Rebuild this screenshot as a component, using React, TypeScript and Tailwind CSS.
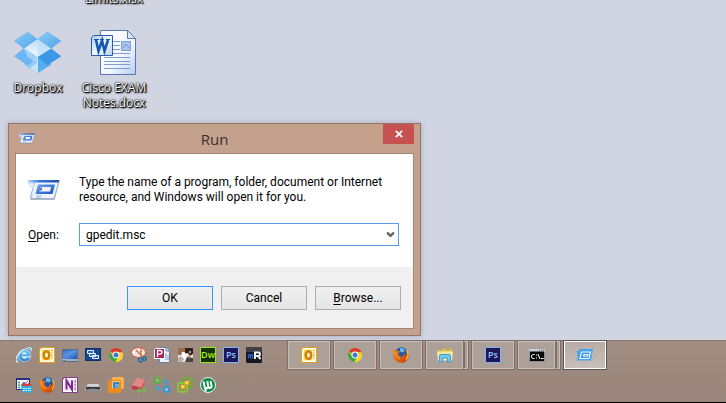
import React, { useState } from 'react'
import { ChevronDown } from 'lucide-react'

type IconProps = { className?: string }

const DropboxIcon: React.FC<IconProps> = ({ className }) => (
  <svg viewBox="42 93 147 132" className={className} aria-hidden="true">
    <defs>
      <linearGradient id="dbFlap" x1="0" y1="0" x2="1" y2="1">
        <stop offset="0" stopColor="#8ccbf6" />
        <stop offset="1" stopColor="#4fa6ea" />
      </linearGradient>
      <linearGradient id="dbLid" x1="0" y1="0" x2="0" y2="1">
        <stop offset="0" stopColor="#c3e0f8" />
        <stop offset="1" stopColor="#f1f8fe" />
      </linearGradient>
    </defs>
    <path d="M73 145v50l41 27v-52z" fill="#8fcaf5" />
    <path d="M155 145v50l-41 27v-52z" fill="#57aeee" />
    <path d="M114 190v32l-20-13v-8z" fill="#c4e3fa" />
    <path d="M43 122l41-27 30 22-41 28z" fill="url(#dbFlap)" stroke="#4a9de0" />
    <path d="M186 122l-42-27-30 22 41 28z" fill="url(#dbFlap)" stroke="#4a9de0" />
    <path d="M73 145l-30 24 41 27 30-25z" fill="#6bb7f1" stroke="#4a9de0" />
    <path d="M155 145l31 24-42 27-30-25z" fill="#3c97e6" stroke="#3a8ddb" />
    <path d="M73 145l41-28 41 28-41 26z" fill="url(#dbLid)" />
    <path d="M114 117l41 28-41 26z" fill="#b4daf8" opacity=".6" />
    <path d="M73 145l41 26v20l-30-19z" fill="#a9d6f8" opacity=".8" />
    <path d="M114 171v50" stroke="#dff0fd" strokeWidth="2" />
  </svg>
)

const WordDocIcon: React.FC<IconProps> = ({ className }) => (
  <svg viewBox="0 0 46 46" className={className} aria-hidden="true">
    <defs>
      <linearGradient id="docPage" x1="0" y1="0" x2="1" y2="1">
        <stop offset="0" stopColor="#ffffff" />
        <stop offset=".6" stopColor="#f3f7fe" />
        <stop offset="1" stopColor="#b4cbf2" />
      </linearGradient>
      <linearGradient id="docBadge" x1="0" y1="0" x2="1" y2="1">
        <stop offset="0" stopColor="#a7c9f5" />
        <stop offset=".5" stopColor="#f2f8ff" />
        <stop offset="1" stopColor="#b7d2f6" />
      </linearGradient>
    </defs>
    <path d="M9.500.5h27l8 8v36h-35z" fill="url(#docPage)" stroke="#5b79b0" />
    <path d="M36.500.5v8h8z" fill="#dbe6f8" stroke="#5b79b0" />
    <path d="M22 11.500h7M22 15.500h7M22 19.500h7M13 23.500h26M13 27.500h26M13 31.500h26M13 34.500h26M13 38.500h26" stroke="#7d9cd6" />
    <path d="M30.500 11.500h9v9h-9z" fill="#a9c5ef" stroke="#7d9dd6" />
    <path d="M32 18l3-4 3 4" stroke="#6e95d6" fill="none" />
    <path d="M2.500 5.500h19v20h-21v-18z" fill="url(#docBadge)" stroke="#2b5bab" />
    <path d="M5 10l2.500 11L11 10.500 13.500 21 17 10" fill="none" stroke="#1656b0" strokeWidth="2.600" />
    <path d="M3 9.500h5M9 9.500h4M15 9.500h4" stroke="#1656b0" strokeWidth="1.200" />
  </svg>
)

const RunIcon: React.FC<IconProps> = ({ className }) => (
  <svg viewBox="0 0 32 22" className={className} aria-hidden="true">
    <defs>
      <linearGradient id="runBar" x1="0" x2="1">
        <stop offset="0" stopColor="#b9d3f5" />
        <stop offset=".35" stopColor="#3d7ad6" />
        <stop offset="1" stopColor="#1d4fa6" />
      </linearGradient>
      <linearGradient id="runBox" x1="0" x2="1" y2="1">
        <stop offset="0" stopColor="#6ea6ee" />
        <stop offset="1" stopColor="#174fc4" />
      </linearGradient>
    </defs>
    <path d="M7.500 3h24l-5 18h-24z" fill="#7d8694" opacity=".6" />
    <path d="M7 2h24l-5 17.500H2z" fill="#eef3fb" stroke="#9fb2ce" />
    <path d="M0 4.500h6M1 7.500h5" stroke="#d3e2f6" strokeWidth="2" />
    <path d="M0 1h31.500l-1 2.500H0z" fill="url(#runBar)" />
    <path d="M10 5.500h17L24.500 15h-17z" fill="url(#runBox)" />
    <path d="M12.500 8h10.500l-1 4.500H11.500z" fill="#f4f8fe" />
    <path d="M13.500 8.500l-1 3" stroke="#55606e" strokeWidth="1.500" />
    <path d="M3 15.500h2l-1 3.500H2zM9 16h5l-1 3H8z" fill="#b9d2f4" />
  </svg>
)

const RunTaskIcon: React.FC<IconProps> = ({ className }) => (
  <svg viewBox="0 0 16 16" className={className} aria-hidden="true">
    <path d="M2.500 2H16l-2 11.500H0l1-3H0l1-2H0l1-2H0V4h2z" fill="#42a3ee" />
    <path d="M4.500 5h9l-1.500 6.500H3z" fill="#3c9ae8" stroke="#e8f5ff" strokeWidth="1.200" />
    <path d="M6.500 7h5l-.5 2.500H6z" fill="#fff" />
    <path d="M8 7.700h2l-.3 1h-2z" fill="#2b83d4" />
  </svg>
)

const IEIcon: React.FC<IconProps> = ({ className }) => (
  <svg viewBox="0 0 16 16" className={className} aria-hidden="true">
    <defs>
      <linearGradient id="ie" x1="0" x2="0" y2="1">
        <stop offset="0" stopColor="#7fcdf6" />
        <stop offset="1" stopColor="#1f83cf" />
      </linearGradient>
    </defs>
    <circle cx="8.500" cy="8.500" r="6.500" fill="#d9effb" />
    <path
      d="M8.500 2.500a6 6 0 1 0 5.700 8h-3.500c-.5.800-1.200 1.200-2.200 1.200-1.500 0-2.500-.9-2.600-2.400h8.600C14.700 5.300 12.300 2.500 8.500 2.500zM6 7.200C6.200 5.900 7.200 5.200 8.500 5.200s2.200.7 2.400 2z"
      fill="url(#ie)"
    />
    <path d="M2.500 14.800C-2 15 .5 8.500 6.500 4.200 11.500.600 16.500-.2 15 4" fill="none" stroke="#e8f6fd" strokeWidth="2" />
    <path d="M3 14.500C-1 14.800 1.500 8.500 7 4.300 11.500 1 15.700.700 14.800 3.800" fill="none" stroke="#3c9fe0" strokeWidth="1" />
  </svg>
)

const OutlookIcon: React.FC<IconProps> = ({ className }) => (
  <svg viewBox="0 0 16 16" className={className} aria-hidden="true">
    <path d="M2 0h14v16H0V2z" fill="#e6a310" />
    <path d="M2.500 1.500h12v13h-13v-12z" fill="#fff3c4" stroke="#fff" />
    <path d="M3 3h8v10H3z" fill="#ffd65a" />
    <path d="M12 3.500h2M12 6h2M12 8.500h2M12 11h2" stroke="#e9b64b" />
    <ellipse cx="7.500" cy="8" rx="2.800" ry="3.800" fill="#fff0b8" stroke="#cf8106" strokeWidth="2.400" />
  </svg>
)

const DesktopIcon: React.FC<IconProps> = ({ className }) => (
  <svg viewBox="0 0 16 16" className={className} aria-hidden="true">
    <defs>
      <linearGradient id="desk" x1="0" x2="1" y2="1">
        <stop offset="0" stopColor="#2f5fb4" />
        <stop offset=".5" stopColor="#4f8fe3" />
        <stop offset="1" stopColor="#1f53ad" />
      </linearGradient>
    </defs>
    <path d="M0 2h16v13H0z" fill="#5d6f88" />
    <path d="M1 3h14v9H1z" fill="url(#desk)" />
    <path d="M1 4h14L1 10z" fill="#85b3ee" opacity=".25" />
    <path d="M0 12h16v2H0z" fill="#a1b2c8" />
    <path d="M1 13.500h3" stroke="#5b9a58" />
  </svg>
)

const SwitcherIcon: React.FC<IconProps> = ({ className }) => (
  <svg viewBox="0 0 16 16" className={className} aria-hidden="true">
    <path d="M.500 1.500h15v12H.500z" fill="#15488f" stroke="#0c2f68" />
    <path d="M2.500 3.500h6v3h-6zM4.500 6.500h6v3h-6zM7.500 8.500h6v3h-6z" fill="#2e69ba" stroke="#e8f0fb" />
  </svg>
)

const ChromeIcon: React.FC<IconProps> = ({ className }) => (
  <svg viewBox="0 0 16 16" className={className} aria-hidden="true">
    <circle cx="8" cy="8" r="7" fill="#f4cd21" />
    <path d="M8 8L1.900 4.500A7 7 0 0 1 14.600 5.500H8z" fill="#d93a2b" />
    <path d="M1.900 4.500A7 7 0 0 0 7.500 15l3.200-5.500L8 8 5.300 9.800z" fill="#3fa447" />
    <path d="M14.600 5.500H8L10.800 9.600 7.500 15A7 7 0 0 0 14.600 5.500z" fill="#f7d22c" />
    <circle cx="8" cy="8" r="3.400" fill="#fff" />
    <circle cx="8" cy="8" r="2.500" fill="#3f7bd0" />
  </svg>
)

const SnipIcon: React.FC<IconProps> = ({ className }) => (
  <svg viewBox="0 0 16 16" className={className} aria-hidden="true">
    <ellipse cx="7.500" cy="5.500" rx="7" ry="4.800" fill="#f5f1ee" stroke="#cf5a42" />
    <path d="M4 4.500h8M4 7h6" stroke="#d9c4ba" />
    <path d="M5 3l7 7M10 1.500v8" stroke="#dd6b45" strokeWidth="1.400" />
    <circle cx="9.500" cy="13" r="2" fill="none" stroke="#2d6e9f" strokeWidth="1.400" />
    <circle cx="13.500" cy="11.500" r="1.800" fill="none" stroke="#2d6e9f" strokeWidth="1.400" />
  </svg>
)

const AccessIcon: React.FC<IconProps> = ({ className }) => (
  <svg viewBox="0 0 16 16" className={className} aria-hidden="true">
    <path d="M5.500.500h7l3 3v12h-10z" fill="#eef2fb" stroke="#6f7fa5" />
    <path d="M12 .500v3.500h3.500" fill="#cfd9ee" stroke="#6f7fa5" />
    <path d="M12 6v7M14 8v5" stroke="#8599c4" />
    <path d="M1.500 1.500h9v10h-10v-9z" fill="#a2265c" stroke="#fff" />
    <path d="M3.500 10V3.500h2.500q2 0 2 1.800t-2 1.800h-2" fill="none" stroke="#fff" strokeWidth="1.300" />
  </svg>
)

const PhotoIcon: React.FC<IconProps> = ({ className }) => (
  <svg viewBox="0 0 16 16" className={className} aria-hidden="true">
    <path d="M1 1h15v14H1z" fill="#ede6e0" />
    <path d="M1 1h7v4H5v3H1z" fill="#a06a4c" />
    <path d="M8 1h8v6l-3 2-2-3-3 1z" fill="#2b2220" />
    <path d="M1 11l4-3 2 4-2 3H1z" fill="#b9b1ab" />
    <path d="M10 10l6 1v4H8z" fill="#4a4341" />
    <path d="M5 5l5 2-2 6-4-4z" fill="#fff" />
    <path d="M12 4h2v2h-2zM11 8h3v2h-3z" fill="#d9996f" />
  </svg>
)

const DreamweaverIcon: React.FC<IconProps> = ({ className }) => (
  <svg viewBox="0 0 16 16" className={className} aria-hidden="true">
    <path d="M.500.500h15v15H.500z" fill="#133207" stroke="#95e61d" />
    <text x="8" y="11" textAnchor="middle" fontFamily="Open Sans, sans-serif" fontSize="9" fontWeight="600" fill="#a9f01f">Dw</text>
  </svg>
)

const PhotoshopIcon: React.FC<IconProps> = ({ className }) => (
  <svg viewBox="0 0 16 16" className={className} aria-hidden="true">
    <path d="M.500.500h15v15H.500z" fill="#1c1758" stroke="#82b5f6" />
    <text x="8" y="11" textAnchor="middle" fontFamily="Open Sans, sans-serif" fontSize="9" fontWeight="600" fill="#8fc3ff">Ps</text>
  </svg>
)

const MRIcon: React.FC<IconProps> = ({ className }) => (
  <svg viewBox="0 0 16 16" className={className} aria-hidden="true">
    <rect width="16" height="16" rx="1.500" fill="#17181b" />
    <path d="M0 1.500Q0 0 1.500 0h13Q16 0 16 1.500V5H0z" fill="#3e4044" />
    <path d="M2.500 11.500V8h4v3.500M4.500 8v3.500" fill="none" stroke="#2a5fd6" strokeWidth="1.300" />
    <path d="M9 12V5.500h3.500q1.500 0 1.500 1.700T12.500 9H9.500M12 9l2.500 3" fill="none" stroke="#f0f2f5" strokeWidth="2" />
  </svg>
)

const TaskManagerIcon: React.FC<IconProps> = ({ className }) => (
  <svg viewBox="0 0 16 16" className={className} aria-hidden="true">
    <path d="M.500 1.500h13v11H.500z" fill="#f5f6fb" stroke="#26356f" />
    <path d="M0 1h14v2H0z" fill="#21317c" />
    <path d="M2 5.500h2M2 8h2M2 10.500h2" stroke="#3fa05a" strokeWidth="1.500" />
    <path d="M5 9l3-4 1 2 3-3" stroke="#5560c9" fill="none" />
    <path d="M5 8h11v7.500H6z" fill="#33b3e3" />
    <path d="M6 8.500l2-1.500 2.500 1.500L13 7l2.500 1.500" stroke="#d8362f" strokeWidth="2" fill="none" />
    <path d="M7 11.500h8M7 13.500h8" stroke="#eafaff" strokeDasharray="1.500 1" />
  </svg>
)

const FirefoxIcon: React.FC<IconProps> = ({ className }) => (
  <svg viewBox="0 0 16 16" className={className} aria-hidden="true">
    <defs>
      <linearGradient id="fox" x1="0" x2="1" y2="1">
        <stop offset="0" stopColor="#ef8b22" />
        <stop offset=".6" stopColor="#dc5e13" />
        <stop offset="1" stopColor="#b23b0c" />
      </linearGradient>
    </defs>
    <circle cx="8.500" cy="6.500" r="6.300" fill="#28579f" />
    <path d="M7 1.500c2-1 4.500 0 5 2l-2 2-3-1z" fill="#67b7e8" />
    <path
      d="M1 1.500L4 4l3 .3-1.800 2.500L7 9.500c2 1 4-.5 4-2.500 1.500.5 2 1.500 1.600 2.500 1.400-2 1.400-4.500.4-6.500 2.500 2 3.500 5.500 2 8.700A7.600 7.600 0 0 1 .700 9C.200 6 .3 3.500 1 1.500z"
      fill="url(#fox)"
    />
    <path d="M13.500 3c2 3 1.800 7-.5 9.500" fill="none" stroke="#f8c92d" strokeWidth="1.200" />
    <path d="M2 5c0 4 2 6 5 6.500" fill="none" stroke="#f6ac39" />
  </svg>
)

const OneNoteIcon: React.FC<IconProps> = ({ className }) => (
  <svg viewBox="0 0 16 16" className={className} aria-hidden="true">
    <path d="M2 0h14v16H0V2z" fill="#86408b" />
    <path d="M2.500 1.500h12v13h-13v-12z" fill="#f4e6f5" stroke="#fff" />
    <path d="M12.500 3h1.500v3h-1.500zM12.500 7h1.500v2h-1.500zM12.500 10h1.500v3h-1.500z" fill="#b77dbb" />
    <path d="M4.500 12.500v-9l5.500 9v-9" fill="none" stroke="#7b2a81" strokeWidth="2" />
  </svg>
)

const ScannerIcon: React.FC<IconProps> = ({ className }) => (
  <svg viewBox="0 0 16 16" className={className} aria-hidden="true">
    <path d="M3 7h10l3 4v2H0v-2z" fill="#a9aaac" />
    <path d="M3 7h10l1.500 2.500h-13z" fill="#d5d6d8" />
    <path d="M1 10h14v2.500H1z" fill="#37383c" />
    <path d="M2 13q6-3 12 0v1.500H2z" fill="#8c8d92" />
  </svg>
)

const VMwareIcon: React.FC<IconProps> = ({ className }) => (
  <svg viewBox="0 0 16 16" className={className} aria-hidden="true">
    <rect x="4" width="12" height="12" rx="1.500" fill="#fbb04b" />
    <rect y="3" width="13" height="13" rx="1.500" fill="#f08a1c" />
    <path d="M5 5h6v6H5z" fill="#5aaee6" />
    <path d="M5 5h6v2H7v4H5z" fill="#3583c4" />
    <path d="M4.500 12V4.500H12" fill="none" stroke="#fbc982" />
  </svg>
)

const EraserIcon: React.FC<IconProps> = ({ className }) => (
  <svg viewBox="0 0 16 16" className={className} aria-hidden="true">
    <path d="M6 .800l8 2-4 7.700-9-2z" fill="#e8878a" />
    <path d="M1 8.500l9 2v3.500l-9-2z" fill="#c33b41" />
    <path d="M14 2.800v3.500L10 14v-3.500z" fill="#d65a5f" />
    <path d="M8 11v5M5.500 13.500h5M13 10.500v5M10.500 13h5" stroke="#6cc04f" strokeWidth="1.500" />
  </svg>
)

const TransferIcon: React.FC<IconProps> = ({ className }) => (
  <svg viewBox="0 0 16 16" className={className} aria-hidden="true">
    <rect x="1" y="1" width="5" height="5" rx="1" fill="#a3ad95" stroke="#5cb03f" strokeWidth="2" />
    <rect x="10" y="10" width="5" height="5" rx="1" fill="#9fb4bf" stroke="#2a9bd8" strokeWidth="2" />
    <path d="M9 4h1.500Q13 4 13 6.500V8M7 12.500H5.500Q3 12.500 3 10V8.500" fill="none" stroke="#359fd9" strokeWidth="2" />
  </svg>
)

const VSphereIcon: React.FC<IconProps> = ({ className }) => (
  <svg viewBox="0 0 16 16" className={className} aria-hidden="true">
    <rect x="6" y="1.200" width="8.800" height="8.800" rx="1" fill="none" stroke="#6fae2d" strokeWidth="2" />
    <rect x="1.200" y="6" width="8.800" height="8.800" rx="1" fill="none" stroke="#8ac33b" strokeWidth="2" />
    <path d="M4 8h4v4H4zM8 4h4v4H8z" fill="#ffd22e" />
    <path d="M4 12h4V9M8 8h4V5" fill="none" stroke="#c98f14" />
  </svg>
)

const UTorrentIcon: React.FC<IconProps> = ({ className }) => (
  <svg viewBox="0 0 16 16" className={className} aria-hidden="true">
    <circle cx="8" cy="8" r="7.500" fill="#128a4a" stroke="#e6f4ec" />
    <path d="M3.500 4.500l1 5q.5 2 2.300 1.800 1.700-.3 1.400-2L7.300 4M8 9.500q.8 1.800 2.500 1.300 1.500-.6 1-2.300l-1-4.500M4.800 10l1 4.500" fill="none" stroke="#fff" strokeWidth="1.900" />
  </svg>
)

const ExplorerIcon: React.FC<IconProps> = ({ className }) => (
  <svg viewBox="0 0 16 16" className={className} aria-hidden="true">
    <path d="M1 2.500h5l1-1h7l1 2v9H1z" fill="#e4bf55" />
    <path d="M2 3h3M9 2.500h4" stroke="#78b552" />
    <path d="M0 4.500h16l-1 9H1z" fill="#f9e79a" />
    <path d="M2.500 15V9Q2.500 7.500 4 7.500h8q1.500 0 1.500 1.500v6h-3v-4h-5v4z" fill="#76c9ef" stroke="#379fd3" />
  </svg>
)

const ConsoleIcon: React.FC<IconProps> = ({ className }) => (
  <svg viewBox="0 0 16 16" className={className} aria-hidden="true">
    <path d="M.500 2.500h15v12H.500z" fill="#050505" stroke="#8b9298" />
    <path d="M0 2h16v2.500H0z" fill="#c8d0d6" />
    <path d="M10 3.200h1M12 3.200h1M14 3.200h1" stroke="#4b5a68" />
    <path d="M5.500 7.500H4L2.500 8.500v2L4 11.500h1.500M7.500 7.500v1M7.500 10.500v1M9 7l2 5M12 11.500h2.500" fill="none" stroke="#fff" />
  </svg>
)

const pinnedApps = [
  { name: 'Internet Explorer', icon: IEIcon },
  { name: 'Outlook', icon: OutlookIcon },
  { name: 'Show desktop', icon: DesktopIcon },
  { name: 'Switch between windows', icon: SwitcherIcon },
  { name: 'Chrome', icon: ChromeIcon },
  { name: 'Snipping Tool', icon: SnipIcon },
  { name: 'Access', icon: AccessIcon },
  { name: 'Photos', icon: PhotoIcon },
  { name: 'Dreamweaver', icon: DreamweaverIcon },
  { name: 'Photoshop', icon: PhotoshopIcon },
  { name: 'mR', icon: MRIcon },
  { name: 'Task Manager', icon: TaskManagerIcon },
  { name: 'Firefox', icon: FirefoxIcon },
  { name: 'OneNote', icon: OneNoteIcon },
  { name: 'Scanner', icon: ScannerIcon },
  { name: 'VMware', icon: VMwareIcon },
  { name: 'Eraser', icon: EraserIcon },
  { name: 'Transfer', icon: TransferIcon },
  { name: 'vSphere', icon: VSphereIcon },
  { name: 'uTorrent', icon: UTorrentIcon },
]

const openApps = [
  { name: 'Outlook', icon: OutlookIcon },
  { name: 'Chrome', icon: ChromeIcon },
  { name: 'Firefox', icon: FirefoxIcon },
  { name: 'File Explorer', icon: ExplorerIcon, stacked: true },
  { name: 'Photoshop', icon: PhotoshopIcon },
  { name: 'Command Prompt', icon: ConsoleIcon, stacked: true },
  { name: 'Run', icon: RunTaskIcon, active: true },
]

const labelClass =
  'text-center text-xs leading-[15px] text-white [text-shadow:1px_1px_1px_#000,0_0_2px_#000,1px_1px_2px_#000,0_0_1px_#000]'

const dialogButton =
  'h-6 w-[86px] border bg-linear-to-b from-[#f0f0f0] to-[#e5e5e5] text-xs leading-4 text-black'

const DesktopIcons: React.FC = () => (
  <div className="grid w-[152px] grid-cols-2">
    <div className="col-start-2 -mt-[9px] mb-6 h-[15px]">
      <p className={labelClass}>Limits.xlsx</p>
    </div>
    <div className="col-start-1 flex flex-col items-center gap-1">
      <DropboxIcon className="h-[46px] w-12" />
      <p className={labelClass}>Dropbox</p>
    </div>
    <div className="flex flex-col items-center gap-1">
      <WordDocIcon className="size-[46px]" />
      <p className={labelClass}>
        Cisco EXAM
        <br />
        Notes.docx
      </p>
    </div>
  </div>
)

const RunDialog: React.FC = () => {
  const [command, setCommand] = useState('gpedit.msc')

  return (
    <form
      role="dialog"
      aria-labelledby="run-title"
      onSubmit={(e) => e.preventDefault()}
      className="absolute top-[123px] left-2 w-[413px] border border-[#937668] bg-[#c4a18c] px-1.5 pb-1.5 font-['Roboto','Open_Sans',sans-serif] shadow-[0_0_5px_rgba(80,80,110,0.35)]"
    >
      {/* Title bar */}
      <header className="grid h-[29px] grid-cols-[1fr_auto_1fr] items-center">
        <RunIcon className="ml-1 h-[11px] w-4" />
        <h1 id="run-title" className="font-['Open_Sans',sans-serif] text-[15px] leading-5 text-[#3b302b]">Run</h1>
        <button
          type="button"
          aria-label="Close"
          className="flex h-5 w-[31px] items-center justify-center self-start justify-self-end bg-[#c75050]"
        >
          <svg viewBox="0 0 8 8" className="size-2" aria-hidden="true">
            <path d="M.800.800l6.400 6.400M7.200.800L.800 7.200" stroke="#fff" strokeWidth="1.700" />
          </svg>
        </button>
      </header>

      <div className="border border-[#a68675] bg-[#f0f0f0]">
        <div className="bg-white px-3 py-[21px]">
          <div className="flex items-center gap-[19px]">
            <RunIcon className="h-[22px] w-8 shrink-0" />
            <p className="text-xs leading-[15px] whitespace-nowrap text-black">
              Type the name of a program, folder, document or Internet
              <br />
              resource, and Windows will open it for you.
            </p>
          </div>
          <div className="mt-[18px] flex items-center">
            <label htmlFor="run-command" className="w-[51px] text-xs leading-4 text-black">
              <u className="underline-offset-2">O</u>pen:
            </label>
            <div className="flex h-[23px] w-80 items-center border border-[#569de5] bg-white">
              <input
                id="run-command"
                type="text"
                value={command}
                onChange={(e) => setCommand(e.target.value)}
                className="h-full min-w-0 flex-1 px-1.5 text-xs leading-4 text-black outline-none"
              />
              <button type="button" aria-label="Show history" className="flex h-full w-4 items-center justify-center">
                <ChevronDown size={11} strokeWidth={5} className="text-[#606060]" />
              </button>
            </div>
          </div>
        </div>
        <div className="flex justify-end gap-2 px-3 pt-[19px] pb-[18px]">
          <button type="submit" className={`${dialogButton} border-[#3399ff]`}>OK</button>
          <button type="button" className={`${dialogButton} border-[#acacac]`}>Cancel</button>
          <button type="button" className={`${dialogButton} border-[#acacac]`}>
            <u className="underline-offset-2">B</u>rowse...
          </button>
        </div>
      </div>
    </form>
  )
}

const Taskbar: React.FC = () => (
  <footer className="flex h-[63px] items-start border-t border-b border-t-[#8b7971] border-b-black bg-linear-to-b from-[#a18d82] to-[#98857b]">
    <nav aria-label="Pinned" className="ml-4 grid grid-cols-[repeat(11,16px)] gap-x-[7px] gap-y-3.5 pt-1.5">
      {pinnedApps.map(({ name, icon: Icon }) => (
        <button key={name} type="button" title={name} className="size-4">
          <Icon className="size-4" />
        </button>
      ))}
    </nav>
    <nav aria-label="Running" className="-mt-px ml-[25px] flex gap-0.5">
      {openApps.map(({ name, icon: Icon, stacked, active }) => (
        <button
          key={name}
          type="button"
          title={name}
          className={`flex h-[30px] w-11 border ${active ? 'border-[#5f534d]' : 'border-[#7d6d65]'}`}
        >
          <span
            className={`flex h-full flex-1 items-center justify-center border ${
              active ? 'border-white bg-linear-to-b from-[#b9aca6] to-[#c8bfba]' : 'border-[#cbc0b9] bg-[#ada098]'
            }`}
          >
            <Icon className="size-4" />
          </span>
          {stacked && <span className="h-full w-[5px] border border-l-2 border-[#cbc0b9] border-l-[#7d6d65] bg-[#ada098]" />}
        </button>
      ))}
    </nav>
  </footer>
)

export default function App() {
  return (
    <div className="flex min-h-screen flex-col overflow-hidden bg-[#d1d5e2] font-['Open_Sans','Noto_Sans',sans-serif]">
      <main className="relative flex-1">
        <DesktopIcons />
        <RunDialog />
      </main>
      <Taskbar />
    </div>
  )
}
